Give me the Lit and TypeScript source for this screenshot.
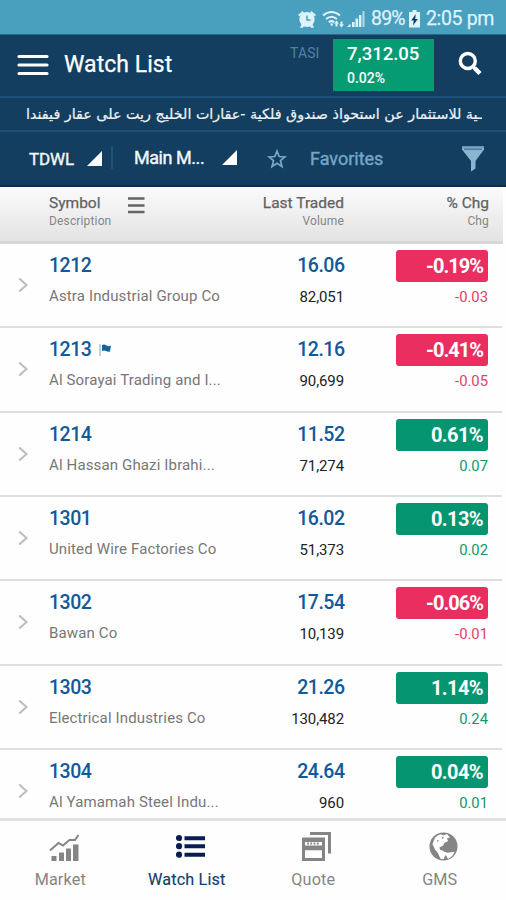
import { LitElement, html, css, svg } from "lit";
import { customElement, property } from "lit/decorators.js";
import { classMap } from "lit/directives/class-map.js";

interface Quote {
  symbol: string;
  name: string;
  last: string;
  volume: string;
  pct: string;
  chg: string;
  flag?: boolean;
}

const QUOTES: Quote[] = [
  { symbol: "1212", name: "Astra Industrial Group Co", last: "16.06", volume: "82,051", pct: "-0.19%", chg: "-0.03" },
  { symbol: "1213", name: "Al Sorayai Trading and I...", last: "12.16", volume: "90,699", pct: "-0.41%", chg: "-0.05", flag: true },
  { symbol: "1214", name: "Al Hassan Ghazi Ibrahi...", last: "11.52", volume: "71,274", pct: "0.61%", chg: "0.07" },
  { symbol: "1301", name: "United Wire Factories Co", last: "16.02", volume: "51,373", pct: "0.13%", chg: "0.02" },
  { symbol: "1302", name: "Bawan Co", last: "17.54", volume: "10,139", pct: "-0.06%", chg: "-0.01" },
  { symbol: "1303", name: "Electrical Industries Co", last: "21.26", volume: "130,482", pct: "1.14%", chg: "0.24" },
  { symbol: "1304", name: "Al Yamamah Steel Indu...", last: "24.64", volume: "960", pct: "0.04%", chg: "0.01" },
];

const icon = (w: number, h: number, body: unknown) =>
  html`<svg width=${w} height=${h} viewBox="0 0 ${w} ${h}">${body}</svg>`;

@customElement("status-bar")
class StatusBar extends LitElement {
  static styles = css`
    :host { display: flex; height: 34px; background: #499fbe; color: #dff3fb; align-items: center;
      padding: 3px 12px 0 298px; box-sizing: border-box; font-size: 19.500px; white-space: nowrap; -webkit-text-stroke: 0.25px; }
    svg { display: block; flex: none; fill: currentColor; }
    .wifi { margin-left: 6px; }
    .signal { margin-left: 3px; }
    .level { margin-left: 6px; width: 35px; letter-spacing: -0.8px; }
    .battery { margin-left: 4px; }
    .time { margin-left: 6px; letter-spacing: -0.35px; }
  `;
  render() {
    return html`
      ${icon(18, 18, svg`
        <circle cx="9" cy="9.500" r="7.600"/><path d="M0 5 4.500 1 6 2.400 1.600 6.400zM18 5 13.500 1 12 2.400 16.400 6.400zM2 17.500l2-4 3 1.500L4.500 18zM16 17.500l-2-4-3 1.500 2.500 3z"/>
        <path d="M9 5.500v4.500h3.500" fill="none" stroke="#499fbe" stroke-width="1.500"/>`)}
      <svg class="wifi" width="22" height="18" viewBox="0 0 22 18">
        <g fill="none" stroke="currentColor" stroke-width="2"><path d="M1 5.500Q9.500-1.500 18 5.500M4 9Q9.500 4.500 15 9M6.800 12.300Q9.500 10 12.200 12.300"/></g>
        <path d="M8 13.500h3.500L9.800 16.500zM14.500 10.500l2.500 3h-1.500v3h-2v-3H12zM19.500 17.500l-2.500-3h1.500v-3h2v3H22z"/>
      </svg>
      <svg class="signal" width="18" height="18" viewBox="0 0 18 18">
        <path d="M0 17l3.500-3.500V17zM5 12h2.600v5H5zM8.500 8.500h2.600V17H8.500zM12 5h2.400v12H12z"/><path d="M15.500 1h2v16h-2z" opacity=".7"/>
      </svg>
      <span class="level">89%</span>
      <svg class="battery" width="11" height="18" viewBox="0 0 11 18">
        <path d="M3.500 0h4v2H11v15.500H0V2h3.500z"/><path d="M6.700 4 2.300 10.500h2.500L4 15.500 8.800 9H6.200z" fill="#123c5c"/>
      </svg>
      <span class="time">2:05 pm</span>`;
  }
}

@customElement("app-header")
class AppHeader extends LitElement {
  static styles = css`
    :host { display: flex; height: 62px; background: #133e60; color: #fff; box-sizing: border-box;
      border-top: 1px solid #2d6688; white-space: nowrap; }
    svg { display: block; flex: none; }
    .menu { margin: 18px 0 0 17px; }
    .title { margin: 16px 0 0 15px; width: 213px; font-size: 23px; line-height: 27px; letter-spacing: 0.05px; -webkit-text-stroke: 0.25px; }
    .index { margin: 10px 0 0 13px; width: 43px; font-size: 14px; line-height: 17px; letter-spacing: 0.1px; color: #5181a6; }
    .quote { margin-top: 4px; width: 101px; height: 52px; flex: none; background: #059c74; padding: 5px 0 0 14px; box-sizing: border-box; font-weight: 500; }
    .value { font-size: 18.500px; line-height: 20px; }
    .pct { font-size: 14px; line-height: 18px; margin-top: 5px; }
    .search { margin: 16px 0 0 24px; }
  `;
  render() {
    return html`
      <svg class="menu" width="32" height="24" viewBox="0 0 32 24"><path d="M2 3.500h28M2 12h28M2 20.500h28" stroke="#fff" stroke-width="3.200" stroke-linecap="round"/></svg>
      <div class="title">Watch List</div>
      <div class="index">TASI</div>
      <div class="quote"><div class="value">7,312.05</div><div class="pct">0.02%</div></div>
      <svg class="search" width="26" height="26" viewBox="0 0 26 26" fill="none" stroke="#fff"><circle cx="9.800" cy="10" r="7.500" stroke-width="3.400"/><path d="M15 15.500l2 2" stroke-width="3"/><path d="M16.500 17l5.500 5.500" stroke-width="4.500"/></svg>`;
  }
}

@customElement("news-ticker")
class NewsTicker extends LitElement {
  static styles = css`
    :host { display: flex; height: 36px; box-sizing: border-box; background: #133e60; border-top: 2px solid #1b507c;
      border-bottom: 2px solid #1b507c; color: #eef4fa; align-items: center; padding: 0 24px 0 0; }
    .news { flex: 1; direction: rtl; overflow: hidden; white-space: nowrap; font: 14.300px/30px "DejaVu Sans", sans-serif; -webkit-text-stroke: 0.2px; }
  `;
  render() {
    return html`<div class="news">ـية للاستثمار عن استحواذ صندوق فلكية -عقارات الخليج ريت على عقار فيفندا</div>`;
  }
}

@customElement("filter-bar")
class FilterBar extends LitElement {
  static styles = css`
    :host { display: flex; height: 55px; box-sizing: border-box; background: #133e60; border-bottom: 2px solid #0b2f50;
      color: #f1f6fa; font-size: 18px; line-height: 22px; white-space: nowrap; -webkit-text-stroke: 0.4px; }
    svg { display: block; flex: none; }
    .exchange { margin: 16px 0 0 29px; width: 58px; font-size: 17px; letter-spacing: -0.1px; }
    .corner { margin-top: 19px; }
    .divider { margin: 14px 0 0 8px; width: 2px; height: 23px; background: #1b5275; }
    .market { margin: 15px 0 0 21px; width: 88px; letter-spacing: -0.45px; }
    .corner.second { margin-top: 18px; }
    .star { margin: 17px 0 0 29px; }
    .favorites { margin: 16px 0 0 23px; width: 152px; color: #76a5c7; }
    .funnel { margin-top: 14px; }
  `;
  render() {
    const corner = svg`<path d="M15 0v15H0z" fill="#fff"/>`;
    return html`
      <div class="exchange">TDWL</div>
      <svg class="corner" width="16" height="16" viewBox="0 0 16 16">${corner}</svg>
      <div class="divider"></div>
      <div class="market">Main M...</div>
      <svg class="corner second" width="16" height="16" viewBox="0 0 16 16">${corner}</svg>
      <svg class="star" width="20" height="20" viewBox="0 0 20 20"><path d="M10 2l2.200 5.500 5.800.4-4.500 3.700 1.500 5.900-5-3.200-5 3.200 1.500-5.900L2 7.900l5.800-.4z" fill="none" stroke="#78a8c7" stroke-width="1.700"/></svg>
      <div class="favorites">Favorites</div>
      <svg class="funnel" width="22" height="26" viewBox="0 0 22 26"><path d="M0 0h22v3.500L13.500 15v7.500L9 25.500V15L0 3.500z" fill="#8bb4d0"/><path d="M0 0h22v1.600H0z" fill="#6c91b2"/><path d="M2 3.200h18" stroke="#4f7899" stroke-width="1.500"/></svg>`;
  }
}

@customElement("column-heads")
class ColumnHeads extends LitElement {
  static styles = css`
    :host { display: flex; height: 57px; box-sizing: border-box; margin-right: 3px; background: linear-gradient(#fbfbfb, #e3e3e3);
      border-bottom: 3px solid #d7d7d7; color: #626262; padding: 6px 0 0 49px; white-space: nowrap; }
    .head { font-size: 15.500px; line-height: 20px; -webkit-text-stroke: 0.25px; }
    .sub { font-size: 12px; line-height: 15px; color: #858585; letter-spacing: 0.15px; margin-top: 1px; }
    .symbol { width: 79px; }
    .right { text-align: right; }
    .last { width: 199px; }
    .change { width: 145px; }
    svg { display: block; flex: none; margin-top: 4px; }
  `;
  render() {
    return html`
      <div class="symbol"><div class="head">Symbol</div><div class="sub">Description</div></div>
      <svg width="17" height="17" viewBox="0 0 17 17"><path d="M0 1.500h16.500M0 8.500h16.500M0 15h16.500" stroke="#646464" stroke-width="2.600"/></svg>
      <div class="right last"><div class="head">Last Traded</div><div class="sub">Volume</div></div>
      <div class="right change"><div class="head">% Chg</div><div class="sub">Chg</div></div>`;
  }
}

@customElement("quote-row")
class QuoteRow extends LitElement {
  @property({ attribute: false }) quote!: Quote;
  static styles = css`
    :host { display: flex; flex: none; height: 84.370px; box-sizing: border-box; margin-right: 4px; padding-right: 14px;
      border-bottom: 2px solid #dfdfdf; white-space: nowrap; }
    .chevron { margin: 33px 0 0 18px; flex: none; display: block; }
    .names { margin: 10px 0 0 21px; width: 190px; flex: none; }
    .symbol, .last { font-size: 19.500px; line-height: 23px; font-weight: 500; color: #12599a; letter-spacing: -0.5px; }
    .symbol { display: flex; align-items: center; gap: 8px; }
    .last { margin-right: -0.5px; }
    .desc { margin-top: 10px; font-size: 15px; line-height: 18px; color: #777; letter-spacing: 0.14px; }
    .prices { margin-top: 10px; width: 105px; text-align: right; flex: none; }
    .volume { margin-top: 11px; font-size: 15px; line-height: 18px; color: #222; letter-spacing: -0.1px; }
    .changes { margin: 6px 0 0 52px; width: 92px; flex: none; text-align: right; color: #10996f; }
    .pct { height: 32px; border-radius: 3px; background: #059671; color: #fff; box-sizing: border-box; padding-right: 5px;
      font-size: 20px; line-height: 32px; font-weight: 700; letter-spacing: -0.6px; }
    .chg { margin-top: 6px; font-size: 14.800px; line-height: 18px; }
    .down { color: #e0416c; }
    .down .pct { background: #ea2f60; letter-spacing: -1px; }
  `;
  render() {
    const q = this.quote;
    return html`
      <svg class="chevron" width="10" height="16" viewBox="0 0 10 16"><path d="M1.200 1.500 8.500 8l-7.300 6.500" fill="none" stroke="#bcbcbc" stroke-width="2"/></svg>
      <div class="names">
        <div class="symbol">${q.symbol}${q.flag
          ? html`<svg width="12" height="12" viewBox="0 0 12 12"><path d="M1 0v12" stroke="#a9c4d9" stroke-width="1.500"/><path d="M3 1q2.500-1 4.500.5T12 1.500l-1 6q-2 .6-4-.5T3 7z" fill="#17649a"/></svg>`
          : ""}</div>
        <div class="desc">${q.name}</div>
      </div>
      <div class="prices"><div class="last">${q.last}</div><div class="volume">${q.volume}</div></div>
      <div class=${classMap({ changes: true, down: q.pct.startsWith("-") })}><div class="pct">${q.pct}</div><div class="chg">${q.chg}</div></div>`;
  }
}

@customElement("bottom-nav")
class BottomNav extends LitElement {
  static styles = css`
    :host { display: grid; grid-template-columns: repeat(4, 126.500px); height: 82px; flex: none; box-sizing: border-box;
      border-top: 3px solid #e2e2e2; background: #fefefe; color: #858585; }
    .tab { display: flex; flex-direction: column; align-items: center; padding: 11px 6px 0 0; font-size: 16.200px; line-height: 20px; white-space: nowrap; }
    .icon { height: 32px; margin-left: 8px; }
    .label { margin-top: 6px; letter-spacing: 0.15px; }
    .active { color: #13406a; -webkit-text-stroke: 0.15px; }
    svg { display: block; }
  `;
  render() {
    return html`
      <div class="tab"><div class="icon">${icon(30, 32, svg`
        <path d="M1 18.500 9.500 11l4.500 2.500L20.500 8H26l3.500-5" fill="none" stroke="#858585" stroke-width="2"/>
        <path d="M2.500 24H7.500v5h-5zM10 20.500h5V29h-5zM17 16.500h5V29h-5zM24 12.500h5.500V29H24z" fill="#858585"/>`)}</div><div class="label">Market</div></div>
      <div class="tab active"><div class="icon">${icon(30, 32, svg`
        <g fill="#071e50"><circle cx="3" cy="6" r="3.100"/><circle cx="3" cy="14.200" r="3.100"/><circle cx="3" cy="22.700" r="3.100"/><path d="M8.500 4.200H29v4H8.500zM8.500 12.200H29v4H8.500zM8.500 20.700H29v4H8.500z"/></g>`)}</div><div class="label">Watch List</div></div>
      <div class="tab"><div class="icon">${icon(30, 32, svg`
        <path d="M8 1.500h19.500V21.500" fill="none" stroke="#858585" stroke-width="3"/>
        <path d="M1.500 7h20v20.500h-20zM1.500 16.800h20" fill="none" stroke="#858585" stroke-width="3"/><path d="M2 7h19v3H2zM2 13.500h19v3H2z" fill="#858585"/><path d="M5 11.500h12.500" stroke="#858585" stroke-width="2" stroke-dasharray="1.800 1.500"/>`)}</div><div class="label">Quote</div></div>
      <div class="tab"><div class="icon">${icon(30, 32, svg`
        <circle cx="14.500" cy="14.500" r="14" fill="#858585"/>
        <path d="M6 5.500 9.500 3l3-.8 1.500 1.300 4-1.500 3 3.500-3 .8 1 3-3.500 1.500-1.500 3-3.500 1.500.5 2.500 3 1 2.500 3 -1 3.500-1 2-3-.5-2.500-5.500L6 17.500 3.500 12z" fill="#fff"/>
        <path d="M12.500 4.500l2.500 1-1.500 1.500zM8 8l2 .5-1.500 1.500z" fill="#858585"/>
        <path d="M14.500 19.500l4 1.300 7-1q-1.500 4.700-6.500 7.200l-1.500-3-3.500-2z" fill="#fff"/>`)}</div><div class="label">GMS</div></div>`;
  }
}

@customElement("app-root")
class AppRoot extends LitElement {
  static styles = css`
    :host { display: flex; flex-direction: column; width: 506px; height: 900px; overflow: hidden; background: #fefefe;
      font-family: Roboto, "Liberation Sans", sans-serif; }
    status-bar, app-header, news-ticker, filter-bar, column-heads { flex: none; }
    .list { flex: 1; min-height: 0; overflow: hidden; display: flex; flex-direction: column; }
  `;
  render() {
    return html`
      <status-bar></status-bar>
      <app-header></app-header>
      <news-ticker></news-ticker>
      <filter-bar></filter-bar>
      <column-heads></column-heads>
      <div class="list">${QUOTES.map((q) => html`<quote-row .quote=${q}></quote-row>`)}</div>
      <bottom-nav></bottom-nav>`;
  }
}
